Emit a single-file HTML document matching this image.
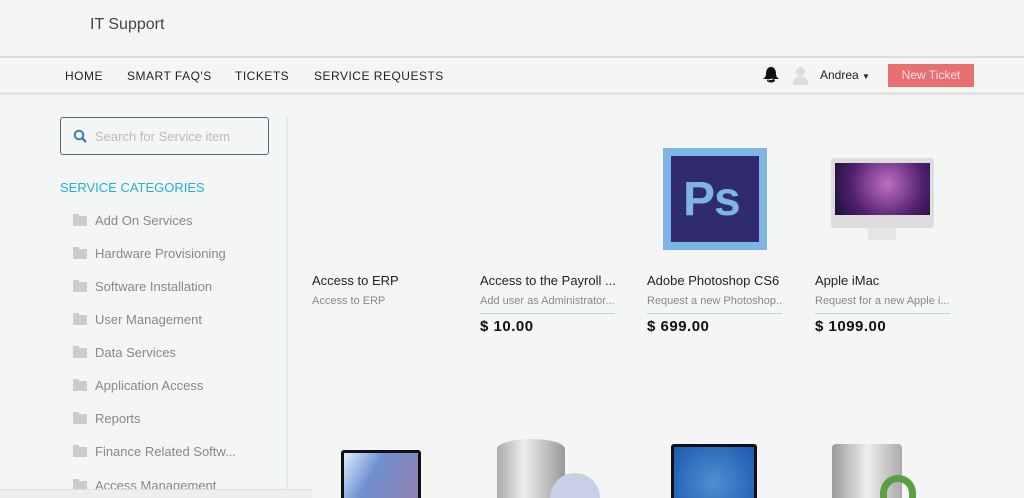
<!DOCTYPE html>
<html><head><style>
*{margin:0;padding:0;box-sizing:border-box}
html{width:1024px;height:498px;overflow:hidden}
body{width:1024px;height:498px;overflow:hidden;background:#f4f5f5;font-family:"Liberation Sans",sans-serif;position:relative}
.a{position:absolute}
.nav a{position:absolute;top:69px;font-size:12px;letter-spacing:.5px;color:#222}
.cat{position:absolute;left:95px;font-size:13px;color:#888}
.fold{position:absolute;left:73px;width:14px;height:10px;background:#ccc;border-radius:1px}
.fold:before{content:"";position:absolute;left:0;top:-2px;width:6px;height:3px;background:#ccc}
.nm{position:absolute;font-size:13px;color:#222}
.ds{position:absolute;font-size:11px;color:#888;width:135px;padding-bottom:6px;border-bottom:1px solid #b8d4e0;white-space:nowrap;overflow:hidden}
.pr{position:absolute;font-size:15px;font-weight:bold;color:#111;letter-spacing:.5px}
</style></head><body>
<div class="a" style="left:90px;top:16px;font-size:16px;color:#444">IT Support</div>
<div class="a" style="left:0;top:56px;width:1024px;height:2px;background:#dcdcdc"></div>
<div class="a" style="left:0;top:92px;width:1024px;height:3px;background:#e2e2e2"></div>
<div class="nav"><a style="left:65px">HOME</a><a style="left:127px">SMART FAQ'S</a><a style="left:235px">TICKETS</a><a style="left:314px">SERVICE REQUESTS</a></div>
<svg class="a" style="left:762px;top:66px" width="18" height="18" viewBox="0 0 18 18"><path d="M9 1c-4 0-5 4-5 7 0 3-2 4-3 5h16c-1-1-3-2-3-5 0-3-1-7-5-7z" fill="#111"/><ellipse cx="9" cy="14.5" rx="4" ry="2" fill="#111"/><path d="M6 14l5-1" stroke="#fff" stroke-width="1"/></svg>
<div class="a" style="left:792px;top:67px;width:17px;height:18px;"><div style="position:absolute;left:4px;top:0;width:9px;height:9px;border-radius:50%;background:#ddd"></div><div style="position:absolute;left:1px;top:9px;width:15px;height:9px;border-radius:7px 7px 0 0;background:#ddd"></div></div>
<div class="a" style="left:820px;top:68px;font-size:12px;color:#222">Andrea <span style="font-size:8px">▼</span></div>
<div class="a" style="left:888px;top:64px;width:86px;height:23px;background:#e87070;color:#fde;font-size:12px;text-align:center;line-height:23px">New Ticket</div>
<div class="a" style="left:60px;top:117px;width:209px;height:38px;border:1px solid #5a6080;border-radius:3px"></div>
<svg class="a" style="left:73px;top:129px" width="15" height="15" viewBox="0 0 15 15"><circle cx="6" cy="6" r="4.3" fill="none" stroke="#3a7fb0" stroke-width="2"/><path d="M9 9l4 4" stroke="#3a7fb0" stroke-width="2.4"/></svg>
<div class="a" style="left:95px;top:129px;font-size:13px;color:#bbb">Search for Service item</div>
<div class="a" style="left:286px;top:117px;width:2px;height:381px;background:#dce8ee"></div>
<div class="a" style="left:60px;top:180px;font-size:13px;color:#1fb3d6">SERVICE CATEGORIES</div>
<div class="fold" style="top:216px"></div><div class="cat" style="top:213px">Add On Services</div>
<div class="fold" style="top:249px"></div><div class="cat" style="top:246px">Hardware Provisioning</div>
<div class="fold" style="top:282px"></div><div class="cat" style="top:279px">Software Installation</div>
<div class="fold" style="top:315px"></div><div class="cat" style="top:312px">User Management</div>
<div class="fold" style="top:348px"></div><div class="cat" style="top:345px">Data Services</div>
<div class="fold" style="top:381px"></div><div class="cat" style="top:378px">Application Access</div>
<div class="fold" style="top:414px"></div><div class="cat" style="top:411px">Reports</div>
<div class="fold" style="top:447px"></div><div class="cat" style="top:444px">Finance Related Softw...</div>
<div class="fold" style="top:481px"></div><div class="cat" style="top:478px">Access Management</div>
<div class="a" style="left:0;top:489px;width:312px;height:9px;background:#eee;border-top:1px solid #ddd"></div>
<div class="a" style="left:663px;top:148px;width:104px;height:102px;background:#7fb4e6"><div style="position:absolute;left:8px;top:8px;width:88px;height:86px;background:#2f2b6e;color:#7fb4e6;font-size:48px;font-weight:bold;padding:16px 0 0 12px;letter-spacing:-1px">Ps</div></div>
<div class="a" style="left:831px;top:158px;width:103px;height:70px;background:#ddd;border-radius:3px"><div style="position:absolute;left:4px;top:5px;width:95px;height:52px;background:radial-gradient(circle at 55% 40%,#c070c0,#502070 60%,#1a1030)"></div></div>
<div class="a" style="left:868px;top:228px;width:28px;height:12px;background:#e5e5e5"></div>
<div class="nm" style="left:312px;top:273px">Access to ERP</div>
<div class="ds" style="left:312px;top:295px;border-bottom:none">Access to ERP</div>
<div class="nm" style="left:480px;top:273px">Access to the Payroll ...</div>
<div class="ds" style="left:480px;top:295px">Add user as Administrator...</div>
<div class="pr" style="left:480px;top:318px">$ 10.00</div>
<div class="nm" style="left:647px;top:273px">Adobe Photoshop CS6</div>
<div class="ds" style="left:647px;top:295px">Request a new Photoshop...</div>
<div class="pr" style="left:647px;top:318px">$ 699.00</div>
<div class="nm" style="left:815px;top:273px">Apple iMac</div>
<div class="ds" style="left:815px;top:295px">Request for a new Apple i...</div>
<div class="pr" style="left:815px;top:318px">$ 1099.00</div>
<div class="a" style="left:341px;top:450px;width:80px;height:48px;background:#111;border-radius:3px 3px 0 0;overflow:hidden"><div style="position:absolute;left:3px;top:3px;right:3px;bottom:0;background:linear-gradient(120deg,#ddeeff,#7090d0 40%,#9080b0)"></div></div>
<div class="a" style="left:497px;top:439px;width:68px;height:59px;background:linear-gradient(90deg,#aaa,#eee 40%,#999);border-radius:34px 34px 0 0/10px 10px 0 0"></div>
<div class="a" style="left:550px;top:473px;width:50px;height:25px;border-radius:25px 25px 0 0;background:#c8d0e8"></div>
<div class="a" style="left:671px;top:444px;width:86px;height:54px;background:#111;border-radius:3px 3px 0 0"><div style="position:absolute;left:3px;top:3px;right:3px;bottom:0;background:radial-gradient(circle at 50% 70%,#4f8fd0,#1d58b0)"></div></div>
<div class="a" style="left:832px;top:444px;width:70px;height:54px;background:linear-gradient(90deg,#999,#eee,#aaa);border-radius:4px 4px 0 0"></div>
<div class="a" style="left:880px;top:475px;width:36px;height:23px;border-radius:18px 18px 0 0;border:7px solid #5aa040;border-bottom:none"></div>
</body></html>
